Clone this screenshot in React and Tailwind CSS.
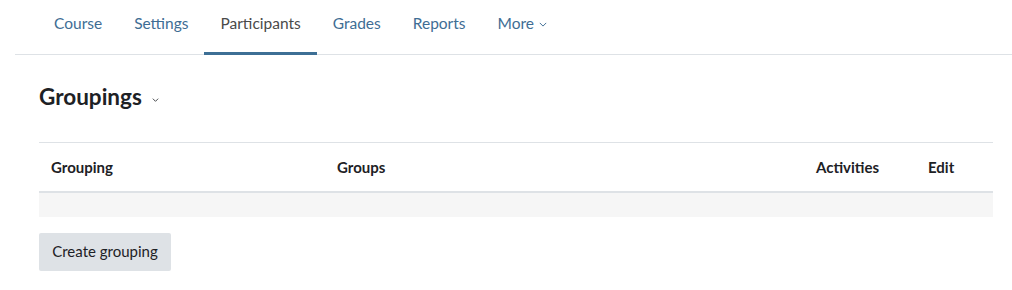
import React from 'react';

const Chevron = ({ className }) => (
  <svg viewBox="0 0 10 6" className={className} fill="none" stroke="currentColor" strokeWidth="1.2">
    <path d="M1 1l4 4 4-4" />
  </svg>
);

const tabs = ['Course', 'Settings', 'Participants', 'Grades', 'Reports'];

export default function App() {
  return (
    <div className="w-[1012px] h-[290px] bg-white text-[#1d2125] font-['Lato','Liberation_Sans',sans-serif] overflow-hidden">
      {/* secondary nav */}
      <div className="ml-[15px] border-b border-[#dee2e6]">
        <ul className="flex pl-[23px] text-[15.5px] mb-[-1px]">
          {tabs.map(t => (
            <li key={t}>
              <a
                className={
                  'flex items-start h-[55px] px-4 pt-[13px] leading-5 ' +
                  (t === 'Participants'
                    ? 'text-[#4a4a4a] border-b-[3px] border-[#3d6f95]'
                    : 'text-[#3e6d94]')
                }
              >
                {t}
              </a>
            </li>
          ))}
          <li>
            <a className="flex items-start h-[55px] px-4 pt-[13px] leading-5 text-[#3e6d94]">
              More
              <Chevron className="w-[8px] h-[5px] ml-[5px] mt-[9px]" />
            </a>
          </li>
        </ul>
      </div>

      <div className="ml-[39px] w-[954px]">
        <h3 className="flex items-center mt-[29px] mb-[32px] h-[26px] text-[22.5px] font-bold">
          Groupings
          <Chevron className="w-[7px] h-[4px] ml-[10px] mt-[5px] text-[#1d2125]" />
        </h3>

        <table className="w-full border-collapse text-[15px]">
          <thead>
            <tr className="border-t border-[#dee2e6] border-b-2">
              <th className="w-[286px] h-[49px] pl-3 text-left font-bold">Grouping</th>
              <th className="w-[479px] pl-3 text-left font-bold">Groups</th>
              <th className="w-[112px] pl-3 text-left font-bold">Activities</th>
              <th className="pl-3 text-left font-bold">Edit</th>
            </tr>
          </thead>
          <tbody>
            <tr className="bg-[#f6f6f6]">
              <td colSpan={4} className="h-[25px]"></td>
            </tr>
          </tbody>
        </table>

        <button className="mt-4 h-[38px] w-[132px] bg-[#dee2e6] text-[15px] text-[#1d2125] rounded-[2px]">
          Create grouping
        </button>
      </div>
    </div>
  );
}
